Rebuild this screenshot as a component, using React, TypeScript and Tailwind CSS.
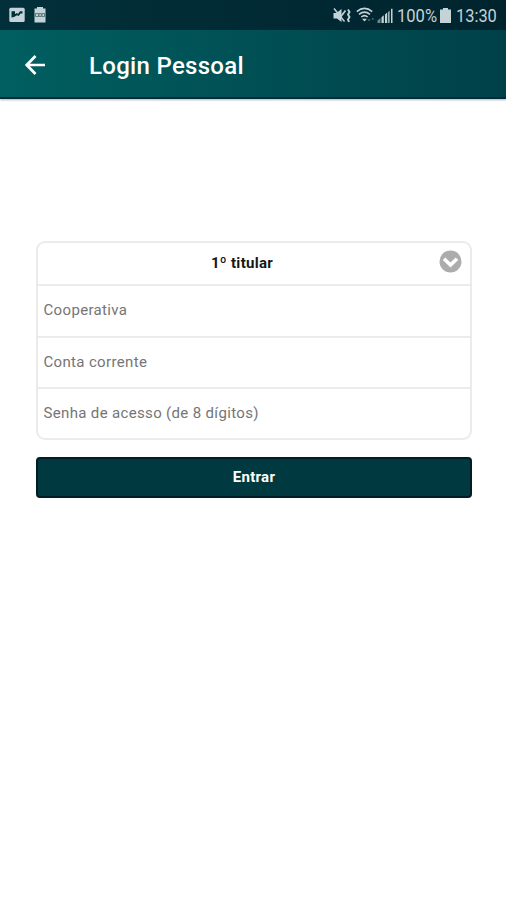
const fields = ["Cooperativa", "Conta corrente", "Senha de acesso (de 8 dígitos)"];

function StatusBar() {
  return (
    <div className="flex h-[30px] items-center bg-linear-to-r from-[#02303a] to-[#00242e] text-[#c3d3d7]">
      <svg className="ml-[9px] h-4 w-4" viewBox="0 0 16 16">
        <rect x="0.3" y="0.8" width="15.4" height="14.2" rx="1.5" fill="currentColor" />
        <path d="M2.500 10.500V4.200H6V7l2-1 1 1 2-2.800h2.500v2.300h-2L9.800 9 8 8.300 5 10Z" fill="#02303a" />
      </svg>
      <svg className="ml-2 h-[18px] w-[14px]" viewBox="0 0 14 18">
        <path d="M4 2.500V1h6v1.500h2.500V16.500h-11V2.500Z" fill="currentColor" />
        <path d="M2.500 7.500h3v3h-3ZM6 7.500h2.300v3H6ZM9 7.500h2.500v3H9Z" fill="none" stroke="#547078" strokeWidth="0.9" />
      </svg>
      <svg className="mt-0.5 ml-auto h-[18px] w-[18px]" viewBox="0 0 18 18">
        <path d="M0.500 6h3L8.500 2v13L4 11.500H0.500Z" fill="currentColor" />
        <path d="M1 1.500 11.500 14.500" stroke="currentColor" strokeWidth="1.500" />
        <path d="M12.500 3.500 7.500 10" stroke="currentColor" strokeWidth="1.700" />
        <path d="m15 2.500 1.500 2.500-1.500 2.500 1.500 2.500-1.500 2.500 1 2.500" fill="none" stroke="currentColor" strokeWidth="1.900" />
      </svg>
      <svg className="ml-[5px] h-4 w-[19px]" viewBox="0 0 19 16" fill="none" stroke="currentColor" strokeWidth="1.600">
        <path d="M0.800 4.600Q8.500-1.800 16.200 4.600M3 7.300q5.500-4.400 11 0M5.300 10q3.200-2.600 6.400 0" />
        <path d="m6 11.700 2.500 2.800 2.500-2.800Z" fill="currentColor" stroke="none" />
        <path d="m11.500 12.500 1.500 1.700 1.500-1.700Zm4 0 1.300-1.700 1.300 1.700Z" fill="#60777d" stroke="none" />
      </svg>
      <svg className="mt-0.5 ml-[2px] h-4 w-4" viewBox="0 0 16 16">
        <path d="M0.500 15v-2.500L3.500 10v5Z" fill="#71878d" />
        <path d="M4.500 15V9.200l2.300-2V15ZM8 15V6.500l2.200-2V15ZM11.200 15V4l1.300-1.200V15ZM14 15V0.800h1.500V15Z" fill="currentColor" />
      </svg>
      <span className="mt-0.5 ml-1 w-[40px] origin-left scale-x-[0.92] text-lg leading-[30px] whitespace-nowrap">100%</span>
      <svg className="ml-[3px] h-[17px] w-[11px]" viewBox="0 0 11 17">
        <path d="M3 1h5v1.500h3V16H0V2.500H3Z" fill="currentColor" />
      </svg>
      <span className="mt-0.5 mr-[9px] ml-[5px] w-[41px] origin-left scale-x-[0.91] text-lg leading-[30px] whitespace-nowrap">13:30</span>
    </div>
  );
}

function Header() {
  return (
    <header className="flex h-[69px] items-center border-b-2 border-[#002d3d] bg-linear-to-r from-[#005f60] to-[#004149] text-white shadow-[0_1px_2px_rgba(0,0,0,0.3)]">
      <svg className="mt-0.5 ml-[25px] h-5 w-[21px]" viewBox="0 0 21 20" fill="none" stroke="currentColor" strokeWidth="2.700">
        <path d="M20 10H2M10.500 1 1.700 10l8.800 9" />
      </svg>
      <h1 className="ml-[43px] pt-1 text-2xl font-medium tracking-[0.3px]">Login Pessoal</h1>
    </header>
  );
}

export default function App() {
  return (
    <div className="min-h-[900px] bg-white font-[Roboto,sans-serif]">
      <StatusBar />
      <Header />
      <main className="mr-[34px] ml-9 pt-[142px]">
        <div className="h-[199px] rounded-[9px] border-2 border-[#ebebeb]">
          <div className="flex h-[41px] items-center">
            <span className="ml-[7px] flex-1 text-center text-[15px] font-bold tracking-[0.3px] text-[#171717]">1º titular</span>
            <svg className="mr-2 mb-1 h-[23px] w-[23px]" viewBox="0 0 23 23">
              <circle cx="11.500" cy="11.500" r="11" fill="#acacac" />
              <path d="m5 8.700 6.500 6.300 6.500-6.300" fill="none" stroke="white" strokeWidth="3.600" />
            </svg>
          </div>
          {fields.map((label) => (
            <input
              key={label}
              placeholder={label}
              className="block h-[51.500px] w-full border-t-2 border-[#ebebeb] px-[5.500px] pb-px text-[15px] tracking-[0.34px] outline-none placeholder:text-[#757575]"
            />
          ))}
        </div>
        <button className="mt-[17px] h-[41px] w-full rounded border-2 border-[#001c24] bg-[#003a40] text-[15px] font-bold tracking-[0.3px] text-white">
          Entrar
        </button>
      </main>
    </div>
  );
}
